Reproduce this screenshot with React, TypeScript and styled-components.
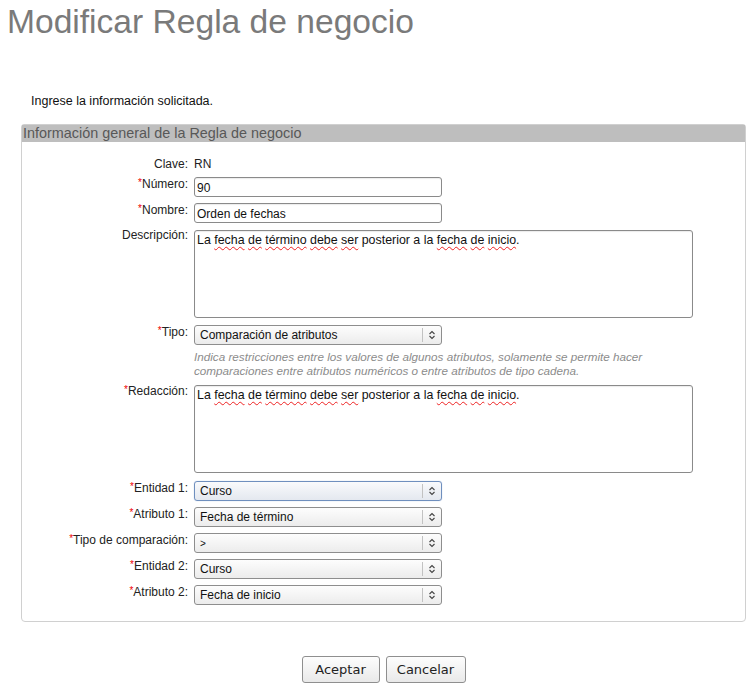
import React from 'react';
import styled, { createGlobalStyle } from 'styled-components';

const GlobalStyle = createGlobalStyle`
  html, body {
    margin: 0;
    padding: 0;
    background: #fff;
  }
  body {
    font-family: "Liberation Sans", Arial, sans-serif;
    font-size: 12px;
    color: #222;
  }
`

const Page = styled.div`
  width: 756px;
  padding-bottom: 6px;
`

const Title = styled.h1`
  margin: 2px 0 0 7px;
  font-size: 33.6px;
  line-height: 40px;
  font-weight: normal;
  color: #7a7a7a;
`

const Intro = styled.p`
  margin: 52px 0 0 31px;
  font-size: 12.5px;
  line-height: 14px;
  color: #111;
`

const Fieldset = styled.section`
  margin: 16px 10px 0 21px;
  border: 1px solid #d0d0d0;
  border-radius: 3px 3px 4px 4px;
  padding-bottom: 16px;
`

const Legend = styled.div`
  background: #bebebe;
  height: 17px;
  color: #585858;
  font-size: 14.4px;
  line-height: 17px;
  padding-left: 1px;
  white-space: nowrap;
`

const FormGrid = styled.div`
  display: grid;
  grid-template-columns: 166px 1fr;
  column-gap: 6px;
  row-gap: 6px;
  padding-top: 16px;
  align-items: start;
`

const Label = styled.label`
  text-align: right;
  line-height: 14px;
  margin-top: -1px;
  color: #222;
  white-space: nowrap;
`

const Req = styled.span`
  color: #e00;
  font-size: 10px;
  vertical-align: 2px;
`

const Value = styled.div`
  line-height: 14px;
  margin-top: -1px;
  color: #222;
`

const TextInput = styled.input`
  box-sizing: border-box;
  width: 248px;
  height: 20px;
  margin: 0;
  padding: 1px 2px 0;
  border: 1px solid #8a8a8a;
  border-radius: 3px;
  font-family: "Liberation Sans", Arial, sans-serif;
  font-size: 12px;
  color: #111;
  background: #fff;
  box-shadow: inset 0 1px 1px rgba(0, 0, 0, 0.08);
`

const TextBox = styled.div<{ $below: number }>`
  box-sizing: border-box;
  width: 499px;
  height: 88px;
  margin: 1px 0 ${p => p.$below}px;
  padding: 2px 2px;
  border: 1px solid #8a8a8a;
  border-radius: 3px;
  font-size: 12.4px;
  line-height: 14px;
  color: #111;
  background: #fff;
  box-shadow: inset 0 1px 1px rgba(0, 0, 0, 0.08);
`

const Misspelled = styled.span`
  text-decoration: underline wavy #e22;
  text-decoration-thickness: 1px;
  text-underline-offset: 2px;
`

const SelectBox = styled.div<{ $focused?: boolean }>`
  box-sizing: border-box;
  width: 248px;
  height: 20px;
  border: 1px solid ${p => p.$focused ? '#6f8fbe' : '#8e8e8e'};
  border-radius: 3px;
  background: ${p => p.$focused
    ? 'linear-gradient(#f9fafc, #e4e8ef)'
    : 'linear-gradient(#fdfdfd, #ececec)'};
  box-shadow: ${p => p.$focused ? '0 0 1px #9db3d6' : 'none'};
  display: flex;
  align-items: center;
`

const SelectText = styled.span<{ $small?: boolean }>`
  flex: 1;
  padding-left: 5px;
  font-family: "Liberation Sans", Arial, sans-serif;
  font-size: ${p => p.$small ? '10px' : '12px'};
  color: #111;
  white-space: nowrap;
  overflow: hidden;
`

const SelectArrow = styled.span`
  width: 18px;
  height: 14px;
  border-left: 1px solid #c2c2c2;
  display: flex;
  align-items: center;
  justify-content: center;
`

const Help = styled.div`
  grid-column: 2;
  margin-top: -1px;
  font-size: 11.7px;
  font-style: italic;
  color: #8c8c8c;
  line-height: 14px;
  width: 500px;
`

const Actions = styled.div`
  display: flex;
  justify-content: center;
  gap: 6px;
  margin: 34px 0 0 21px;
  width: 725px;
`

const Button = styled.button<{ $width: number }>`
  width: ${p => p.$width}px;
  height: 27px;
  padding: 0;
  border: 1px solid #8f8f8f;
  border-radius: 3px;
  background: linear-gradient(#fdfdfd, #e9e9e9);
  font-family: "DejaVu Sans", sans-serif;
  font-size: 13px;
  color: #222;
  cursor: pointer;
`

const Chevrons = () => (
  <svg width="8" height="10" viewBox="0 0 8 10">
    <path d="M1.5 4 L4 1.5 L6.5 4 M1.5 6 L4 8.5 L6.5 6" fill="none" stroke="#444" strokeWidth="1.1" />
  </svg>
)

const Select = ({ value, focused, small }: { value: string; focused?: boolean; small?: boolean }) => (
  <SelectBox $focused={focused}>
    <SelectText $small={small}>{value}</SelectText>
    <SelectArrow><Chevrons /></SelectArrow>
  </SelectBox>
)

const Required = ({ children }: { children: React.ReactNode }) => (
  <Label><Req>*</Req>{children}</Label>
)

// text as shown in the boxes, with the words the spell checker marked
const SpelledText = () => (
  <>
    La <Misspelled>fecha</Misspelled> <Misspelled>de</Misspelled> <Misspelled>término</Misspelled>{' '}
    <Misspelled>debe</Misspelled> <Misspelled>ser</Misspelled> posterior a la <Misspelled>fecha</Misspelled>{' '}
    <Misspelled>de</Misspelled> <Misspelled>inicio</Misspelled>.
  </>
)

export default function App() {
  return (
    <Page>
      <GlobalStyle />
      <Title>Modificar Regla de negocio</Title>
      <Intro>Ingrese la información solicitada.</Intro>
      <Fieldset>
        <Legend>Información general de la Regla de negocio</Legend>
        <FormGrid>
          <Label>Clave:</Label>
          <Value>RN</Value>

          <Required>Número:</Required>
          <TextInput defaultValue="90" />

          <Required>Nombre:</Required>
          <TextInput defaultValue="Orden de fechas" />

          <Label>Descripción:</Label>
          <TextBox $below={1}><SpelledText /></TextBox>

          <Required>Tipo:</Required>
          <Select value="Comparación de atributos" />
          <Help>
            Indica restricciones entre los valores de algunos atributos, solamente se permite hacer
            comparaciones entre atributos numéricos o entre atributos de tipo cadena.
          </Help>

          <Required>Redacción:</Required>
          <TextBox $below={2}><SpelledText /></TextBox>

          <Required>Entidad 1:</Required>
          <Select value="Curso" focused />

          <Required>Atributo 1:</Required>
          <Select value="Fecha de término" />

          <Required>Tipo de comparación:</Required>
          <Select value=">" small />

          <Required>Entidad 2:</Required>
          <Select value="Curso" />

          <Required>Atributo 2:</Required>
          <Select value="Fecha de inicio" />
        </FormGrid>
      </Fieldset>
      <Actions>
        <Button $width={78}>Aceptar</Button>
        <Button $width={80}>Cancelar</Button>
      </Actions>
    </Page>
  );
}
